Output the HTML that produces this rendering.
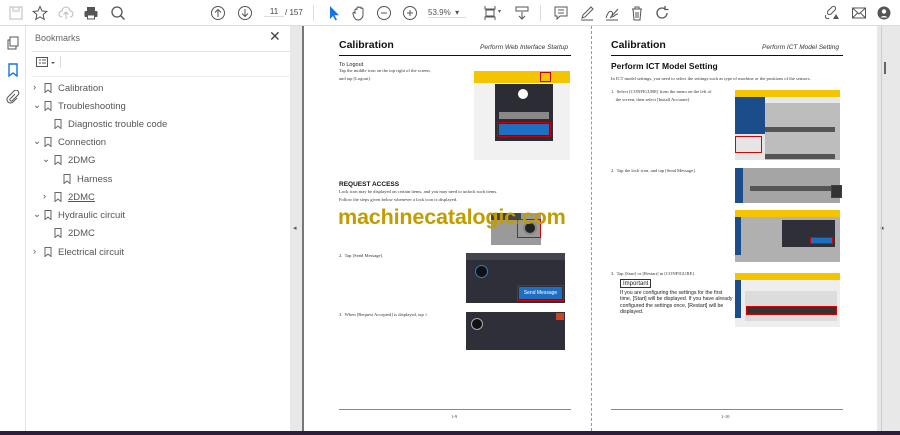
<!DOCTYPE html>
<html><head><meta charset="utf-8"><style>
*{margin:0;padding:0;box-sizing:border-box}
body{width:900px;height:435px;overflow:hidden;background:#fff;font-family:"Liberation Sans",sans-serif;position:relative}
.a{position:absolute}
.tb{left:0;top:0;width:900px;height:26px;background:#fff;border-bottom:1px solid #ddd}
.ic{position:absolute;top:5px;width:16px;height:16px}
.rail{left:0;top:26px;width:26px;height:405px;background:#fff;border-right:1px solid #e3e3e3}
.panel{left:26px;top:26px;width:264px;height:405px;background:#fff}
.bm{position:absolute;font-size:9.5px;color:#555}
.bm svg{position:absolute}
.gray{left:290px;top:26px;width:610px;height:405px;background:#e8e8e8}
.page{background:#fff;top:26px;height:405px}
.t{position:absolute;font-family:"Liberation Serif",serif;font-size:4.6px;color:#333;line-height:7.5px}
.h{position:absolute;font-weight:bold;color:#111}
.dk{position:absolute;background:#2f2f3a}
</style></head><body>
<div class="a tb">
<svg class="ic" style="left:8px" viewBox="0 0 16 16"><rect x="2" y="2" width="12" height="12" fill="none" stroke="#bbb"/><rect x="5" y="2" width="6" height="4" fill="none" stroke="#bbb"/></svg>
<svg class="ic" style="left:32px" viewBox="0 0 16 16"><path d="M8 1.5l2 4.5 4.8.4-3.7 3.2 1.1 4.8L8 11.8 3.8 14.4l1.1-4.8L1.2 6.4 6 6z" fill="none" stroke="#555"/></svg>
<svg class="ic" style="left:58px" viewBox="0 0 16 16"><path d="M4 12a3 3 0 010-6 4 4 0 018 0 3 3 0 010 6M8 14V7M5.5 9.5L8 7l2.5 2.5" fill="none" stroke="#bbb"/></svg>
<svg class="ic" style="left:83px" viewBox="0 0 16 16"><rect x="4" y="2" width="8" height="4" fill="#555"/><rect x="1.5" y="6" width="13" height="6" rx="1" fill="#555"/><rect x="4.5" y="10" width="7" height="4" fill="#fff" stroke="#555"/></svg>
<svg class="ic" style="left:110px" viewBox="0 0 16 16"><circle cx="7" cy="7" r="5" fill="none" stroke="#555" stroke-width="1.3"/><path d="M10.5 10.5l4 4" stroke="#555" stroke-width="1.5"/></svg>
<svg class="ic" style="left:210px" viewBox="0 0 16 16"><circle cx="8" cy="8" r="6.5" fill="none" stroke="#555"/><path d="M8 12V4.5M5 7.5l3-3 3 3" fill="none" stroke="#555"/></svg>
<svg class="ic" style="left:237px" viewBox="0 0 16 16"><circle cx="8" cy="8" r="6.5" fill="none" stroke="#555"/><path d="M8 4v7.5M5 8.5l3 3 3-3" fill="none" stroke="#555"/></svg>
<div class="a" style="left:264px;top:7px;width:20px;font-size:8px;color:#444;text-align:center;border-bottom:1px solid #ddd">11</div>
<div class="a" style="left:285px;top:8px;font-size:8px;color:#444">/ 157</div>
<div class="a" style="left:313px;top:5px;width:1px;height:16px;background:#ddd"></div>
<svg class="ic" style="left:326px" viewBox="0 0 16 16"><path d="M4 1v13l3-3 2.5 4.5 1.5-.8-2.5-4.4H13z" fill="#1473e6"/></svg>
<svg class="ic" style="left:351px" viewBox="0 0 16 16"><path d="M4 9V5a1 1 0 012 0V3a1 1 0 012 0v0a1 1 0 012 0v1a1 1 0 012 0v6a5 5 0 01-5 5c-2 0-3-1-4-3L2 9a1 1 0 012-1z" fill="none" stroke="#555"/></svg>
<svg class="ic" style="left:376px" viewBox="0 0 16 16"><circle cx="8" cy="8" r="6.5" fill="none" stroke="#555"/><path d="M5 8h6" stroke="#555"/></svg>
<svg class="ic" style="left:402px" viewBox="0 0 16 16"><circle cx="8" cy="8" r="6.5" fill="none" stroke="#555"/><path d="M5 8h6M8 5v6" stroke="#555"/></svg>
<div class="a" style="left:428px;top:8px;font-size:8px;color:#555;width:38px;border-bottom:1px solid #ddd">53.9% &nbsp;▾</div>
<svg class="ic" style="left:482px" viewBox="0 0 16 16"><path d="M3 1v3h10V1M3 15v-3h10v3M4 5h8v6H4z" fill="none" stroke="#555"/></svg>
<div class="a" style="left:498px;top:8px;font-size:6px;color:#555">▾</div>
<svg class="ic" style="left:514px" viewBox="0 0 16 16"><rect x="2" y="2" width="12" height="4" fill="none" stroke="#555"/><path d="M8 7v7M5 11l3 3 3-3" fill="none" stroke="#555"/></svg>
<div class="a" style="left:540px;top:5px;width:1px;height:16px;background:#ddd"></div>
<svg class="ic" style="left:553px" viewBox="0 0 16 16"><path d="M2 2h12v9H7l-3 3v-3H2z" fill="none" stroke="#555"/><path d="M5 5h6M5 8h6" stroke="#555"/></svg>
<svg class="ic" style="left:579px" viewBox="0 0 16 16"><path d="M3 13l1-3 8-8 2 2-8 8z" fill="none" stroke="#555"/><path d="M2 15h12" stroke="#555"/></svg>
<svg class="ic" style="left:604px" viewBox="0 0 16 16"><path d="M2 13c2-6 4-8 6-6s-2 5 0 5 3-3 6-3M6 13l8-9M2 15h12" fill="none" stroke="#555"/></svg>
<svg class="ic" style="left:629px" viewBox="0 0 16 16"><path d="M3 4h10M6 4V2h4v2M4 4l1 11h6l1-11M7 7v6M9 7v6" fill="none" stroke="#555"/></svg>
<svg class="ic" style="left:654px" viewBox="0 0 16 16"><path d="M13 8a5 5 0 11-2-4M11 1v3.5h3.5" fill="none" stroke="#555" stroke-width="1.3"/></svg>
<svg class="ic" style="left:824px" viewBox="0 0 16 16"><path d="M7 9l4-4a2 2 0 00-3-3L4 6a2 2 0 003 3M5 13a2 2 0 01-3-3" fill="none" stroke="#555"/><path d="M9 14l3-5 3 5z" fill="#555"/></svg>
<svg class="ic" style="left:851px" viewBox="0 0 16 16"><rect x="1.5" y="3" width="13" height="10" fill="none" stroke="#555"/><path d="M1.5 3L8 9l6.5-6M1.5 13l5-5M14.5 13l-5-5" fill="none" stroke="#555"/></svg>
<svg class="ic" style="left:876px" viewBox="0 0 16 16"><circle cx="8" cy="8" r="6.5" fill="#555"/><circle cx="8" cy="6.5" r="2.2" fill="#fff"/><path d="M4.5 12.5a4 3 0 017 0" fill="#fff"/></svg>
</div>
<div class="a rail">
<svg class="a" style="left:6px;top:10px" width="14" height="14" viewBox="0 0 14 14"><rect x="4" y="1" width="8" height="9" fill="none" stroke="#555"/><path d="M4 4H2v9h8v-3" fill="none" stroke="#555"/></svg>
<svg class="a" style="left:6px;top:37px" width="14" height="14" viewBox="0 0 14 14"><path d="M3 1h8v12l-4-3-4 3z" fill="none" stroke="#1473e6" stroke-width="1.4"/></svg>
<svg class="a" style="left:6px;top:64px" width="14" height="14" viewBox="0 0 14 14"><path d="M9 4l-5 5a1.5 1.5 0 002 2l6-6a2.5 2.5 0 00-4-4L2 7a3.5 3.5 0 005 5l4-4" fill="none" stroke="#555"/></svg>
</div>
<div class="a panel">
<div class="a" style="left:9px;top:7px;font-size:9px;color:#666">Bookmarks</div>
<div class="a" style="left:243px;top:2px;font-size:14px;color:#444">✕</div>
<div class="a" style="left:6px;top:25px;width:258px;height:1px;background:#e3e3e3"></div>
<svg class="a" style="left:10px;top:31px" width="24" height="11" viewBox="0 0 24 11"><rect x=".5" y=".5" width="11" height="9" fill="none" stroke="#555"/><path d="M3 3h2M3 6h2M6 3h4M6 6h4" stroke="#555"/><path d="M15 5l2 2 2-2z" fill="#555"/></svg>
<div class="a" style="left:34px;top:30px;width:1px;height:12px;background:#ddd"></div>
<div class="a" style="left:6px;top:50px;width:258px;height:1px;background:#eee"></div>
</div>
<div class="a" style="left:26px;top:26px;width:264px;height:405px">
<div class="bm" style="left:7px;top:56px">›</div><svg class="a" style="left:18px;top:57px" width="8" height="10" viewBox="0 0 8 10"><path d="M1 .5h6v9L4 7 1 9.5z" fill="none" stroke="#666"/></svg><div class="bm" style="left:32px;top:57px">Calibration</div>
<div class="bm" style="left:7px;top:74px">⌄</div><svg class="a" style="left:18px;top:75px" width="8" height="10" viewBox="0 0 8 10"><path d="M1 .5h6v9L4 7 1 9.5z" fill="none" stroke="#666"/></svg><div class="bm" style="left:32px;top:75px">Troubleshooting</div>
<svg class="a" style="left:28px;top:93px" width="8" height="10" viewBox="0 0 8 10"><path d="M1 .5h6v9L4 7 1 9.5z" fill="none" stroke="#666"/></svg><div class="bm" style="left:42px;top:93px">Diagnostic trouble code</div>
<div class="bm" style="left:7px;top:110px">⌄</div><svg class="a" style="left:18px;top:111px" width="8" height="10" viewBox="0 0 8 10"><path d="M1 .5h6v9L4 7 1 9.5z" fill="none" stroke="#666"/></svg><div class="bm" style="left:32px;top:111px">Connection</div>
<div class="bm" style="left:16px;top:128px">⌄</div><svg class="a" style="left:28px;top:129px" width="8" height="10" viewBox="0 0 8 10"><path d="M1 .5h6v9L4 7 1 9.5z" fill="none" stroke="#666"/></svg><div class="bm" style="left:42px;top:129px">2DMG</div>
<svg class="a" style="left:37px;top:148px" width="8" height="10" viewBox="0 0 8 10"><path d="M1 .5h6v9L4 7 1 9.5z" fill="none" stroke="#666"/></svg><div class="bm" style="left:51px;top:148px">Harness</div>
<div class="bm" style="left:17px;top:165px">›</div><svg class="a" style="left:28px;top:166px" width="8" height="10" viewBox="0 0 8 10"><path d="M1 .5h6v9L4 7 1 9.5z" fill="none" stroke="#666"/></svg><div class="bm" style="left:42px;top:166px;text-decoration:underline">2DMC</div>
<div class="bm" style="left:7px;top:183px">⌄</div><svg class="a" style="left:18px;top:184px" width="8" height="10" viewBox="0 0 8 10"><path d="M1 .5h6v9L4 7 1 9.5z" fill="none" stroke="#666"/></svg><div class="bm" style="left:32px;top:184px">Hydraulic circuit</div>
<svg class="a" style="left:28px;top:202px" width="8" height="10" viewBox="0 0 8 10"><path d="M1 .5h6v9L4 7 1 9.5z" fill="none" stroke="#666"/></svg><div class="bm" style="left:42px;top:202px">2DMC</div>
<div class="bm" style="left:7px;top:220px">›</div><svg class="a" style="left:18px;top:221px" width="8" height="10" viewBox="0 0 8 10"><path d="M1 .5h6v9L4 7 1 9.5z" fill="none" stroke="#666"/></svg><div class="bm" style="left:32px;top:221px">Electrical circuit</div>
</div>
<div class="a gray"></div>
<div class="a" style="left:302px;top:26px;width:1.5px;height:405px;background:#777"></div>
<div class="a" style="left:293px;top:224px;font-size:7px;color:#555">◂</div>
<div class="a" style="left:880px;top:224px;font-size:7px;color:#555">◂</div>
<div class="a" style="left:881px;top:26px;width:1px;height:405px;background:#ccc"></div>
<div class="a" style="left:884px;top:62px;width:2px;height:12px;background:#666"></div>
<div class="a page" style="left:304px;width:573px"></div>
<div class="a" style="left:591px;top:26px;width:0;height:405px;border-left:1px dashed #999"></div>

<!-- Page 1 -->
<div class="h" style="left:339px;top:39px;font-size:10.5px">Calibration</div>
<div class="a" style="left:480px;top:44px;font-size:6.5px;font-style:italic;color:#333">Perform Web Interface Startup</div>
<div class="a" style="left:339px;top:55px;width:232px;height:1.3px;background:#111"></div>
<div class="a" style="left:339px;top:62px;font-size:5.5px;color:#222">To Logout</div>
<div class="t" style="left:339px;top:67px">Tap the middle icon on the top right of the screen,<br>and tap [Logout].</div>
<div class="a" style="left:474px;top:71px;width:96px;height:89px;background:#f1f1f1"></div>
<div class="a" style="left:474px;top:71px;width:96px;height:12px;background:#f5c400"></div>
<div class="a" style="left:540px;top:72px;width:11px;height:10px;border:1px solid #c00"></div>
<div class="dk" style="left:495px;top:84px;width:58px;height:57px;background:#2c2c34"></div>
<div class="a" style="left:518px;top:89px;width:10px;height:10px;border-radius:50%;background:#fff"></div>
<div class="a" style="left:499px;top:112px;width:50px;height:7px;background:#888"></div>
<div class="a" style="left:497px;top:122px;width:54px;height:15px;border:1px solid #c00"></div>
<div class="a" style="left:499px;top:124px;width:50px;height:11px;background:#1e6fc1"></div>
<div class="h" style="left:339px;top:181px;font-size:6.5px">REQUEST ACCESS</div>
<div class="t" style="left:339px;top:188px">Lock icon may be displayed on certain items, and you may need to unlock such items.<br>Follow the steps given below whenever a lock icon is displayed.</div>
<div class="a" style="left:491px;top:213px;width:50px;height:32px;background:#9a9a9a"></div>
<div class="a" style="left:491px;top:213px;width:30px;height:7px;background:#444"></div>
<div class="a" style="left:517px;top:219px;width:24px;height:19px;border:1px solid #d00"></div>
<div class="a" style="left:523px;top:221px;width:14px;height:14px;border-radius:50%;background:#222;border:2px solid #888"></div>
<div class="a" style="left:338px;top:204px;font-size:21.6px;font-weight:bold;color:#c29c00;letter-spacing:-0.2px">machinecatalogic.com</div>
<div class="t" style="left:339px;top:252px">2.&nbsp; Tap [Send Message].</div>
<div class="dk" style="left:466px;top:253px;width:99px;height:50px"></div>
<div class="a" style="left:466px;top:253px;width:99px;height:7px;background:#44444e"></div>
<div class="a" style="left:475px;top:265px;width:13px;height:13px;border-radius:50%;background:#111;border:1px solid #2a7fc9"></div>
<div class="a" style="left:517px;top:285px;width:47px;height:16px;border:1px solid #d00"></div>
<div class="a" style="left:519px;top:287px;width:43px;height:12px;background:#1e6fc1;color:#fff;font-size:5px;line-height:12px;text-align:center">Send Message</div>
<div class="t" style="left:339px;top:311px">3.&nbsp; When [Request Accepted] is displayed, tap ×.</div>
<div class="dk" style="left:466px;top:312px;width:99px;height:38px"></div>
<div class="a" style="left:556px;top:313px;width:8px;height:7px;background:#c42"></div>
<div class="a" style="left:471px;top:318px;width:12px;height:12px;border-radius:50%;background:#111;border:1px solid #aaa"></div>
<div class="a" style="left:339px;top:409px;width:232px;height:1px;background:#888"></div>
<div class="t" style="left:451px;top:413px">1-9</div>

<!-- Page 2 -->
<div class="h" style="left:611px;top:39px;font-size:10.5px">Calibration</div>
<div class="a" style="left:762px;top:44px;font-size:6.5px;font-style:italic;color:#333">Perform ICT Model Setting</div>
<div class="a" style="left:611px;top:55px;width:232px;height:1.3px;background:#111"></div>
<div class="h" style="left:611px;top:61px;font-size:8.5px">Perform ICT Model Setting</div>
<div class="t" style="left:611px;top:75px">In ICT model settings, you need to select the settings such as type of machine or the positions of the sensors.</div>
<div class="t" style="left:611px;top:88px">1.&nbsp; Select [CONFIGURE] from the menu on the left of<br>&nbsp;&nbsp;&nbsp;&nbsp;the screen, then select [Install Accurate].</div>
<div class="a" style="left:735px;top:90px;width:105px;height:70px;background:#bdbdbd"></div>
<div class="a" style="left:735px;top:90px;width:105px;height:7px;background:#f5c400"></div>
<div class="a" style="left:735px;top:97px;width:30px;height:37px;background:#1b4d8a"></div>
<div class="a" style="left:765px;top:97px;width:75px;height:6px;background:#e8e8e8"></div>
<div class="a" style="left:765px;top:127px;width:70px;height:5px;background:#555"></div>
<div class="a" style="left:765px;top:154px;width:70px;height:5px;background:#555"></div>
<div class="a" style="left:735px;top:134px;width:30px;height:26px;background:#e5e5e5"></div>
<div class="a" style="left:735px;top:136px;width:27px;height:17px;border:1px solid #d00"></div>
<div class="t" style="left:611px;top:167px">2.&nbsp; Tap the lock icon, and tap [Send Message].</div>
<div class="a" style="left:735px;top:168px;width:105px;height:35px;background:#a5a5a5"></div>
<div class="a" style="left:735px;top:168px;width:8px;height:35px;background:#1b4d8a"></div>
<div class="a" style="left:750px;top:186px;width:84px;height:5px;background:#555"></div>
<div class="a" style="left:831px;top:185px;width:11px;height:13px;border:1px solid #d00;background:#333"></div>
<div class="a" style="left:735px;top:210px;width:105px;height:52px;background:#b0b0b0"></div>
<div class="a" style="left:735px;top:210px;width:105px;height:7px;background:#f5c400"></div>
<div class="a" style="left:735px;top:217px;width:6px;height:38px;background:#1b4d8a"></div>
<div class="a" style="left:782px;top:220px;width:53px;height:27px;background:#2f2f3a"></div>
<div class="a" style="left:810px;top:237px;width:23px;height:7px;border:1px solid #d00;background:#1e6fc1"></div>
<div class="t" style="left:611px;top:270px">3.&nbsp; Tap [Start] or [Restart] in [CONFIGURE].</div>
<div class="a" style="left:620px;top:279px;width:31px;height:9px;border:1px solid #333;font-size:6px;line-height:8px;padding-left:2px;color:#222">Important</div>
<div class="a" style="left:620px;top:290px;font-size:5.2px;line-height:6.3px;color:#222">If you are configuring the settings for the first<br>time, [Start] will be displayed. If you have already<br>configured the settings once, [Restart] will be<br>displayed.</div>
<div class="a" style="left:735px;top:273px;width:105px;height:54px;background:#eee"></div>
<div class="a" style="left:735px;top:273px;width:105px;height:7px;background:#f5c400"></div>
<div class="a" style="left:735px;top:280px;width:6px;height:38px;background:#1b4d8a"></div>
<div class="a" style="left:745px;top:291px;width:92px;height:30px;background:#dcdcdc"></div>
<div class="a" style="left:746px;top:306px;width:91px;height:9px;border:1px solid #d00;background:#333"></div>
<div class="a" style="left:611px;top:409px;width:232px;height:1px;background:#888"></div>
<div class="t" style="left:721px;top:413px">1-10</div>

<div class="a" style="left:0;top:431px;width:900px;height:4px;background:#2c1f3c"></div>
</body></html>
